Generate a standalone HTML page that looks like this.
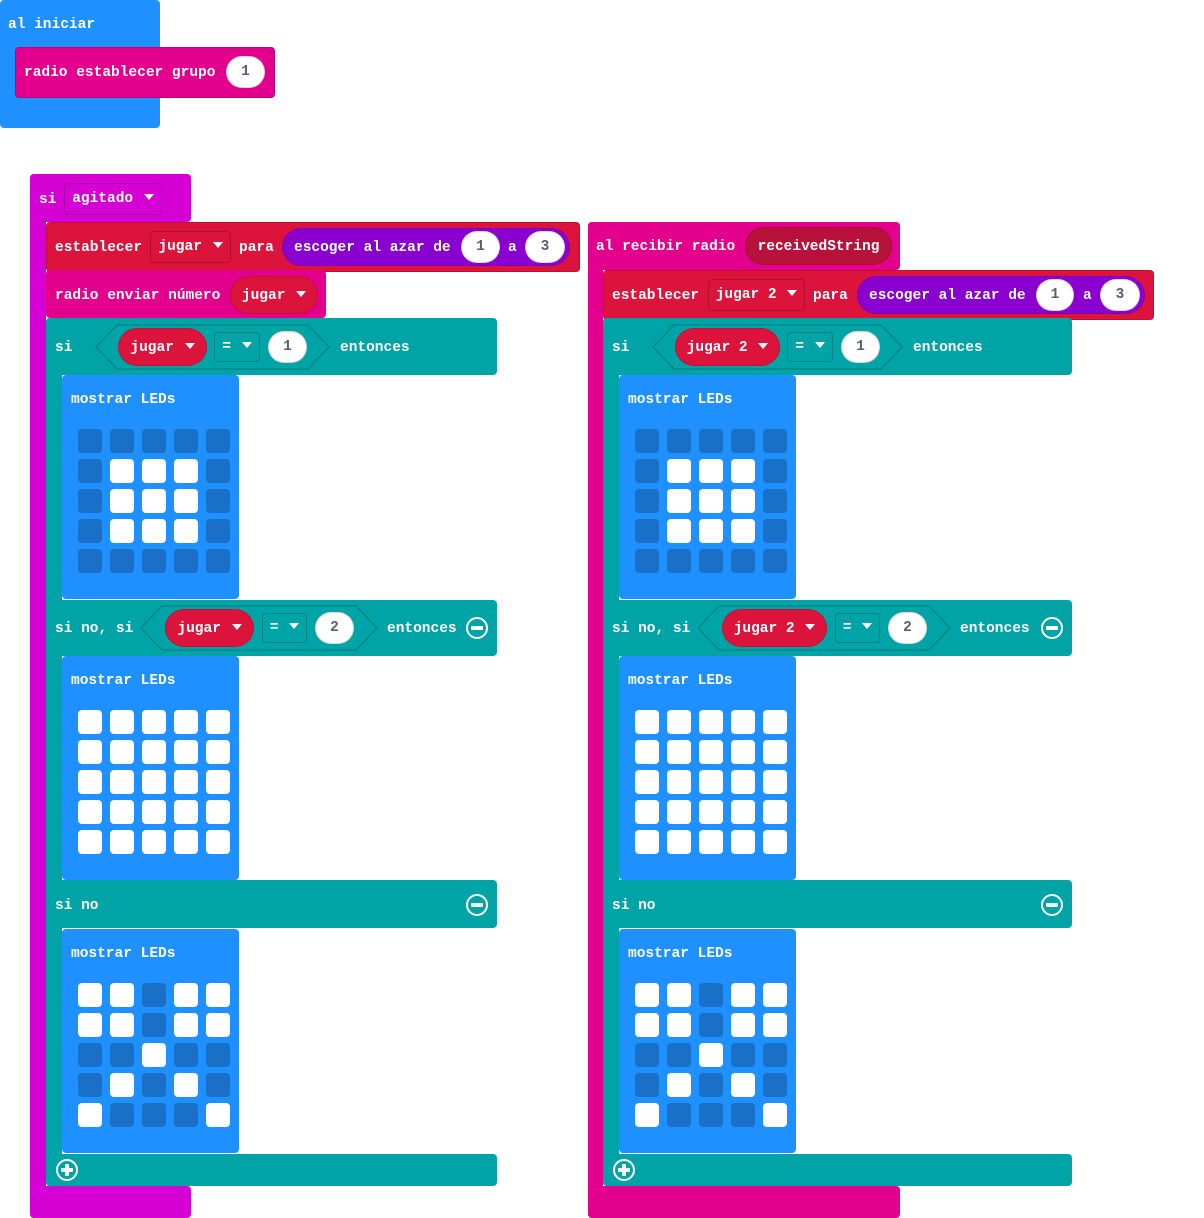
<!DOCTYPE html>
<html><head><meta charset="utf-8"><style>
body{margin:0;width:1204px;height:1218px;background:#fff;position:relative;overflow:hidden;font-family:"Liberation Mono",monospace;font-weight:bold;font-size:14.5px;color:#fff}
.b{position:absolute;border-radius:4px}
.t{position:absolute;white-space:pre;line-height:20px}
.p{position:absolute;border-radius:20px;text-align:center;line-height:38px;white-space:pre}
.w{background:#fff;color:#575E75;border:1px solid rgba(0,0,0,.15);box-sizing:border-box}
.dd{position:absolute;border:1px solid rgba(0,0,0,.2);border-radius:4px;box-sizing:border-box;text-align:center;white-space:pre;line-height:28px}
.led{position:absolute;width:24px;height:24px;border-radius:4px}
.c{position:absolute;width:18px;height:18px;border:2px solid #fff;border-radius:50%}
.tri{display:inline-block;width:0;height:0;border-left:5px solid transparent;border-right:5px solid transparent;border-top:6px solid #fff;vertical-align:middle;margin-left:2px;position:relative;top:-1px}
</style></head><body>
<div id="r"></div>
<script>
var H='';var T=' <span class="tri"></span>';
function b(x,y,w,h,c,ex){H+='<div class="b" style="left:'+x+'px;top:'+y+'px;width:'+w+'px;height:'+h+'px;background:'+c+';'+(ex||'')+'"></div>'}
function t(x,y,s){H+='<div class="t" style="left:'+x+'px;top:'+(y-9)+'px">'+s+'</div>'}
function p(x1,x2,y,s,c){H+='<div class="p" style="left:'+x1+'px;top:'+(y-19)+'px;width:'+(x2-x1)+'px;height:38px;background:'+c+';border:1px solid rgba(0,0,0,.12);box-sizing:border-box;line-height:38px">'+s+'</div>'}
function w(x1,x2,y,s){H+='<div class="p w" style="left:'+x1+'px;top:'+(y-16)+'px;width:'+(x2-x1)+'px;height:32px;line-height:31px">'+s+'</div>'}
function dd(x1,x2,y,s,h){h=h||30;H+='<div class="dd" style="left:'+x1+'px;top:'+(y-h/2)+'px;width:'+(x2-x1)+'px;height:'+h+'px;line-height:'+(h-2)+'px">'+s+'</div>'}
function hex(x1,x2,y){H+='<svg style="position:absolute;left:'+x1+'px;top:'+(y-23)+'px" width="'+(x2-x1)+'" height="46"><polygon points="22,1 '+(x2-x1-22)+',1 '+(x2-x1-1)+',23 '+(x2-x1-22)+',45 22,45 1,23" fill="#00A4A6" stroke="rgba(0,0,0,.18)" stroke-width="1.5"/></svg>'}
function minus(cx,cy){H+='<div class="c" style="left:'+(cx-11)+'px;top:'+(cy-11)+'px"><div style="position:absolute;left:3px;top:7px;width:12px;height:4px;background:#fff;border-radius:1px"></div></div>'}
function plus(cx,cy){minus(cx,cy);H+='<div style="position:absolute;left:'+(cx-2)+'px;top:'+(cy-6)+'px;width:4px;height:12px;background:#fff;border-radius:1px"></div>'}
var A=['00000','01110','01110','01110','00000'],B=['11111','11111','11111','11111','11111'],C=['11011','11011','00100','01010','10001'];
function leds(x,y,pat){t(x+9,y+24,'mostrar LEDs');for(var r=0;r<5;r++)for(var c=0;c<5;c++)H+='<div class="led" style="left:'+(x+16+c*32)+'px;top:'+(y+54+r*30)+'px;background:'+(pat[r][c]=='1'?'#fff':'#1A6FC6')+'"></div>'}
var BL='#1E90FF',MG='#E3008C',PK='#D400D4',RD='#DC143C',TL='#00A4A6';
b(0,0,160,128,BL);
b(15,47,258,49,MG,'border:1px solid rgba(0,0,0,.15)');
t(8,24,'al iniciar');t(24,72,'radio establecer grupo');w(226,265,72,'1');
b(30,174,161,48,PK);b(30,174,16,1044,PK);b(30,1186,161,32,PK);
t(39,199,'si');dd(64,162,199,'agitado'+T,32);
b(588,222,312,48,MG);b(588,222,15,996,MG);b(588,1186,312,32,MG);
t(596,246,'al recibir radio');p(745,892,246,'receivedString','#B8123A');
function ifall(x,r,v,pw){
 b(x,318,r-x,57,TL);b(x,318,16,868,TL);b(x,600,r-x,56,TL);b(x,880,r-x,48,TL);b(x,1154,r-x,32,TL);
 [375,656,929].forEach(function(y){b(x+16,y,177,224,BL)});
 t(x+9,347,'si');t(x+9,628,'si no, si');t(x+9,905,'si no');
 minus(r-20,628);minus(r-20,905);plus(x+21,1170);
 leds(x+16,375,A);leds(x+16,656,B);leds(x+16,929,C);
 hex(x+49,x+284+(pw-89),347);p(x+72,x+72+pw,347,v,RD);var q=x+72+pw;dd(q+7,q+53,347,'='+T);w(q+61,q+100,347,'1');t(q+133,347,'entonces');
 hex(x+94,x+332+(pw-89),628);p(x+119,x+119+pw,628,v,RD);q=x+119+pw;dd(q+8,q+53,628,'='+T);w(q+61,q+100,628,'2');t(q+133,628,'entonces');
}
b(46,222,532,48,RD,'border:1px solid rgba(0,0,0,.15)');
t(55,247,'establecer');dd(150,231,247,'jugar'+T,32);t(239,247,'para');p(282,570,247,'','#8A00D0');t(294,247,'escoger al azar de');w(461,500,247,'1');t(508,247,'a');w(525,565,247,'3');
b(46,270,280,48,MG);t(55,295,'radio enviar número');p(230,318,295,'jugar'+T,RD);
ifall(46,497,'jugar'+T,89);
b(603,270,549,48,RD,'border:1px solid rgba(0,0,0,.15)');
t(612,295,'establecer');dd(708,805,295,'jugar 2'+T,32);t(813,295,'para');p(857,1145,295,'','#8A00D0');t(869,295,'escoger al azar de');w(1036,1074,295,'1');t(1083,295,'a');w(1100,1140,295,'3');
ifall(603,1072,'jugar 2'+T,105);
document.getElementById('r').innerHTML=H;
</script>
</body></html>
